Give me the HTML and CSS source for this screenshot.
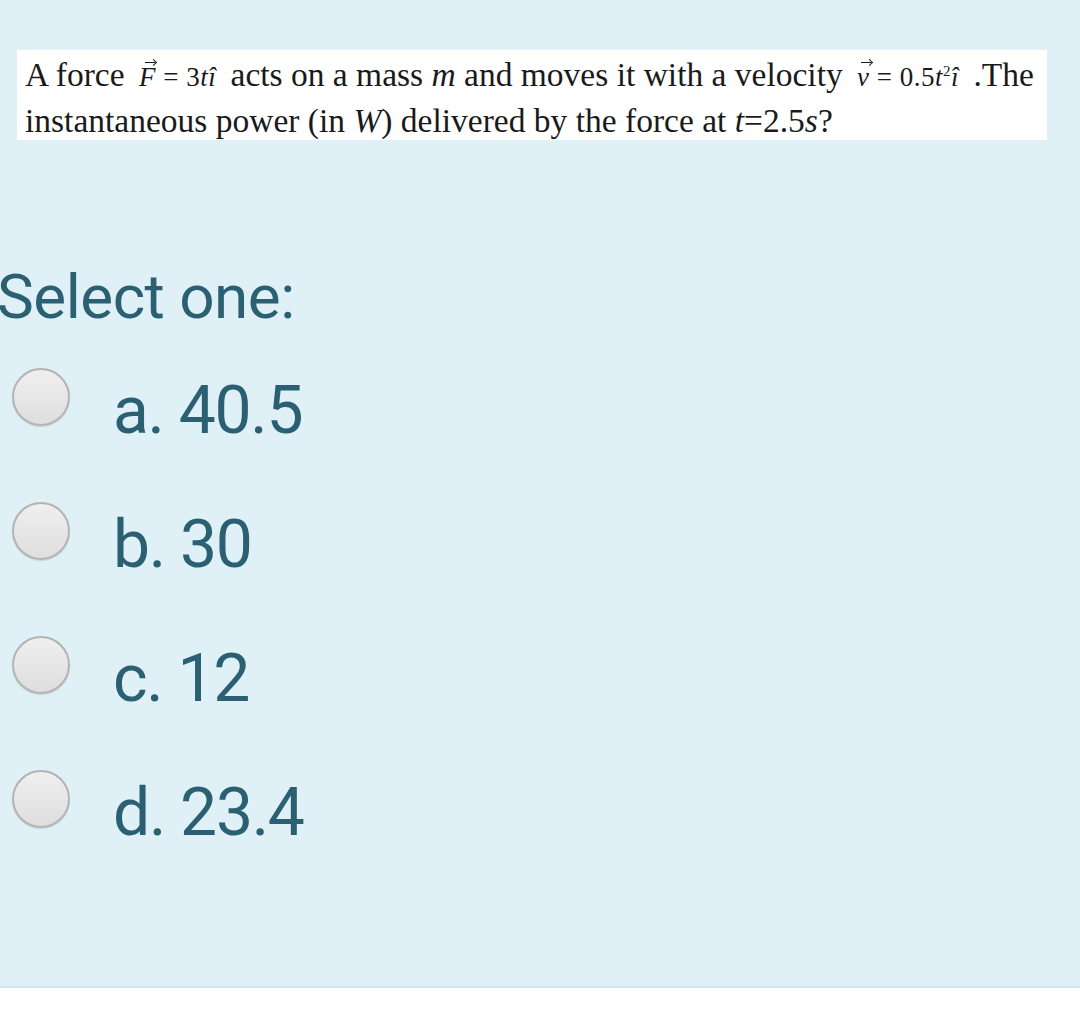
FILE: index.html
```html
<!DOCTYPE html>
<html>
<head>
	<meta name="viewport" content="width=device-width, initial-scale=1.0">
	<meta charset="utf-8">
	<link rel="stylesheet" href="styles.css">
	<title>Question</title>
</head>
<body>
	<div class="que">
		<div class="qtext">
			A force <span class="eq"><i class="vec">F</i> = 3<i>t&icirc;</i></span> acts on a mass <i>m</i> and moves it with a velocity <span class="eq"><i class="vec">v</i> = 0.5<i>t</i><sup>2</sup><i>&icirc;</i></span> .The<br>
			instantaneous power (in <i>W</i>) delivered by the force at <i>t</i>=2.5<i>s</i>?
		</div>
		<div class="prompt">Select one:</div>
		<div class="answer">
			<div class="option"><span class="radio"></span><span class="label">a. 40.5</span></div>
			<div class="option"><span class="radio"></span><span class="label">b. 30</span></div>
			<div class="option"><span class="radio"></span><span class="label">c. 12</span></div>
			<div class="option"><span class="radio"></span><span class="label">d. 23.4</span></div>
		</div>
	</div>
</body>
</html>
```

FILE: styles.css
```css
body {
	margin: 0;
	background-color: white;
	font-family: Roboto, "Liberation Sans", sans-serif;
}
.que {
	height: 988px;
	box-sizing: border-box;
	padding-top: 50px;
	background-color: #dff0f7;
	border-bottom: 2px solid #d3e6ee;
	overflow: hidden;
}
.qtext {
	margin-left: 17px;
	width: 1030px;
	height: 90px;
	box-sizing: border-box;
	padding: 3px 0 0 8px;
	background-color: white;
	color: #1a1a1a;
	font-family: "Liberation Serif", serif;
	font-size: 33.5px;
	line-height: 44px;
	white-space: nowrap;
}
.eq {
	font-size: 27px;
	margin: 0 6px;
	letter-spacing: 0.5px;
}
.eq sup {
	font-size: 15px;
	line-height: 0;
}
.vec {
	position: relative;
	display: inline-block;
	line-height: 1;
}
.vec::before {
	content: "";
	position: absolute;
	left: 35%;
	top: -2px;
	width: 10px;
	border-top: 1px solid #1a1a1a;
}
.vec::after {
	content: "";
	position: absolute;
	left: calc(35% + 6px);
	top: -4px;
	width: 4px;
	height: 4px;
	border-right: 1px solid #1a1a1a;
	border-top: 1px solid #1a1a1a;
	transform: rotate(45deg);
}
.prompt {
	margin: 120px 0 0 -3px;
	color: #2b6072;
	font-size: 62px;
	letter-spacing: -0.5px;
}
.answer {
	margin-top: 34px;
}
.option {
	display: flex;
	align-items: flex-start;
	height: 134px;
}
.radio {
	width: 54px;
	height: 54px;
	margin: 1px 0 0 12px;
	border: 2px solid #b4b4b4;
	border-radius: 50%;
	background: linear-gradient(#efefef, #dedede);
	box-shadow: 0 1px 1px rgba(0, 0, 0, 0.12);
}
.label {
	margin-left: 43px;
	padding-top: 6px;
	color: #2b6072;
	font-size: 66px;
	line-height: 76px;
	letter-spacing: -1.3px;
}
```
